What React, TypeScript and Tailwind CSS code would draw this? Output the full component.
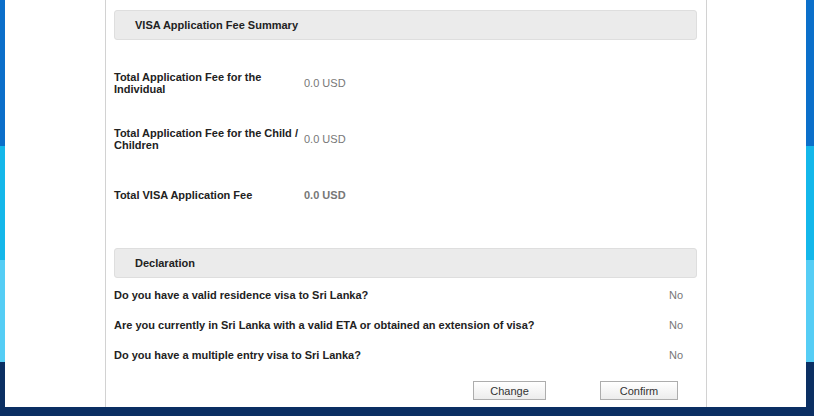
import React from "react";

const strip =
  "bg-[linear-gradient(to_bottom,#0b6fca_0px,#0b6fca_146px,#14b7ea_146px,#14b7ea_260px,#55cdf5_260px,#55cdf5_362px,#0b2f63_362px)]";

function FeeRow({ label, value, bold }: { label: string; value: string; bold?: boolean }) {
  return (
    <div className="flex h-[56px] items-center">
      <div className="w-[190px] text-[11px] font-bold leading-[12px] text-[#222]">{label}</div>
      <div className={`text-[11px] text-[#777] ${bold ? "font-bold" : ""}`}>{value}</div>
    </div>
  );
}

function SectionHeader({ title }: { title: string }) {
  return (
    <div className="flex h-[30px] items-center rounded-[3px] border border-[#dedede] bg-[#ebebeb] pl-[20px] text-[11px] font-bold text-[#222]">
      {title}
    </div>
  );
}

function Question({ q }: { q: string }) {
  return (
    <div className="flex h-[30px] items-center justify-between pr-[14px]">
      <div className="text-[11px] font-bold text-[#222]">{q}</div>
      <div className="text-[11px] text-[#777]">No</div>
    </div>
  );
}

export default function App() {
  return (
    <div className="flex h-[416px] w-[814px] flex-col overflow-hidden bg-white font-['Liberation_Sans',Arial,sans-serif]">
      <div className="flex h-[407px]">
        <div className={`w-[5px] ${strip}`} />
        <div className="flex-1 bg-white">
          <div className="ml-[100px] h-full w-[602px] border-x border-[#d2d2d2] pl-[8px] pr-[9px]">
            <div className="pt-[10px]">
              <SectionHeader title="VISA Application Fee Summary" />
            </div>
            <div className="mt-[15px]">
              <FeeRow label="Total Application Fee for the Individual" value="0.0 USD" />
              <FeeRow label="Total Application Fee for the Child / Children" value="0.0 USD" />
              <FeeRow label="Total VISA Application Fee" value="0.0 USD" bold />
            </div>
            <div className="mt-[25px]">
              <SectionHeader title="Declaration" />
            </div>
            <div className="mt-[2px]">
              <Question q="Do you have a valid residence visa to Sri Lanka?" />
              <Question q="Are you currently in Sri Lanka with a valid ETA or obtained an extension of visa?" />
              <Question q="Do you have a multiple entry visa to Sri Lanka?" />
            </div>
            <div className="mt-[11px] flex">
              <button className="ml-[359px] h-[19px] w-[73px] border border-[#adadad] bg-[linear-gradient(to_bottom,#ffffff,#ececec)] text-[11px] leading-[16px] text-[#333]">
                Change
              </button>
              <button className="ml-[54px] h-[19px] w-[78px] border border-[#adadad] bg-[linear-gradient(to_bottom,#ffffff,#ececec)] text-[11px] leading-[16px] text-[#333]">
                Confirm
              </button>
            </div>
          </div>
        </div>
        <div className={`w-[8px] ${strip}`} />
      </div>
      <div className="h-[9px] bg-[#0b2f63]" />
    </div>
  );
}
